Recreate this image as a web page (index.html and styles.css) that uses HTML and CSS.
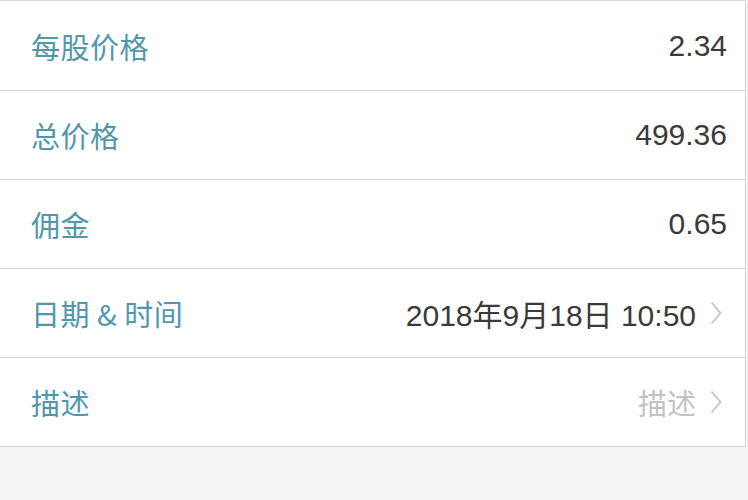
FILE: index.html
```html
<!DOCTYPE html>
<html lang="zh-CN">
<head>
<meta charset="utf-8">
<link rel="stylesheet" href="styles.css">
</head>
<body>
<div class="card">
  <div class="row"><span class="label">每股价格</span><span class="value">2.34</span></div>
  <div class="row"><span class="label">总价格</span><span class="value">499.36</span></div>
  <div class="row"><span class="label">佣金</span><span class="value">0.65</span></div>
  <div class="row"><span class="label">日期 &amp; 时间</span><span class="value">2018年9月18日 10:50<svg class="chev" width="12" height="24" viewBox="0 0 12 24"><path d="M1.5 1.5 L10.5 12 L1.5 22.5" fill="none" stroke="#c4c4c8" stroke-width="1.8"/></svg></span></div>
  <div class="row"><span class="label">描述</span><span class="value muted">描述<svg class="chev" width="12" height="24" viewBox="0 0 12 24"><path d="M1.5 1.5 L10.5 12 L1.5 22.5" fill="none" stroke="#c4c4c8" stroke-width="1.8"/></svg></span></div>
</div>
</body>
</html>
```
FILE: styles.css
```css
html, body {
  margin: 0;
  padding: 0;
}
body {
  background: #f4f4f5;
  font-family: "Liberation Sans", "Noto Sans CJK SC", sans-serif;
  width: 748px;
  height: 500px;
  overflow: hidden;
}
.card {
  width: 745px;
  background: #ffffff;
  border-top: 1px solid #d8d8d8;
  border-right: 1px solid #d4d4d4;
  padding-top: 1px;
}
.row {
  height: 88px;
  display: flex;
  align-items: center;
  justify-content: space-between;
  border-bottom: 1px solid #d6d6d8;
  padding: 0 18px 0 31px;
}
.label {
  font-family: "Noto Sans CJK SC", sans-serif;
  font-size: 29px;
  color: #5097ad;
  letter-spacing: 0.5px;
}
.value {
  display: flex;
  align-items: center;
  gap: 14px;
  font-size: 30px;
  color: #3a3a3a;
}
.value.muted {
  color: #c2c2c5;
  font-family: "Noto Sans CJK SC", sans-serif;
  font-size: 29px;
}
.chev {
  display: block;
  margin-right: 5px;
}
```
